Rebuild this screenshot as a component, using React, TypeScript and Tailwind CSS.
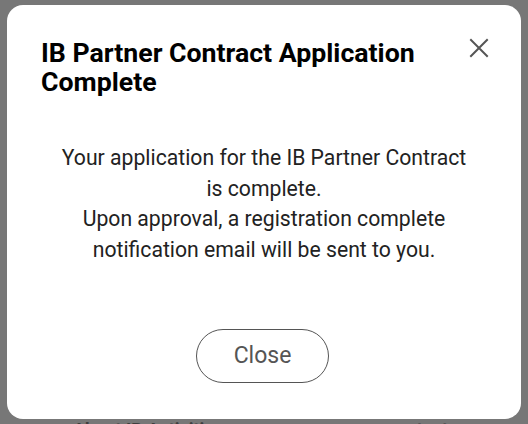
import React from "react";

export default function App() {
  return (
    <div
      className="relative w-[528px] h-[424px] overflow-hidden bg-[#777777] flex flex-col"
      style={{ fontFamily: "Roboto, 'Noto Sans', sans-serif" }}
    >
      <div className="mt-[5px] mx-[7px] h-[414px] shrink-0 rounded-[16px] bg-white flex flex-col pt-[34px] px-[34px]">
        <div className="flex items-start">
          <h1 className="flex-1 text-[26.7px] leading-[28.5px] font-bold text-black pr-[30px]">
            IB Partner Contract Application Complete
          </h1>
          <button className="mt-[-3px] mr-[-4px] w-[24px] h-[24px] flex items-center justify-center text-[#555]">
            <svg width="22" height="22" viewBox="0 0 22 22" fill="none" stroke="#555" strokeWidth="2" strokeLinecap="square">
              <path d="M3 3 L19 19 M19 3 L3 19" />
            </svg>
          </button>
        </div>
        <div className="mt-[47px] text-center text-[21.2px] leading-[30.5px] text-[#222]">
          <p>
            Your application for the IB Partner Contract
            <br />
            is complete.
          </p>
          <p>
            Upon approval, a registration complete
            <br />
            notification email will be sent to you.
          </p>
        </div>
        <div className="mt-[64px] flex justify-center">
          <button className="w-[133px] h-[54px] mr-[3px] rounded-full border border-[#555] text-[23px] text-[#555] bg-white">
            Close
          </button>
        </div>
      </div>
      <div className="flex justify-between pl-[73px] pr-[80px] text-[18px] leading-[22px] font-bold text-[#3e3e3e]">
        <span>About IB Activities</span>
        <span>contact</span>
      </div>
    </div>
  );
}
